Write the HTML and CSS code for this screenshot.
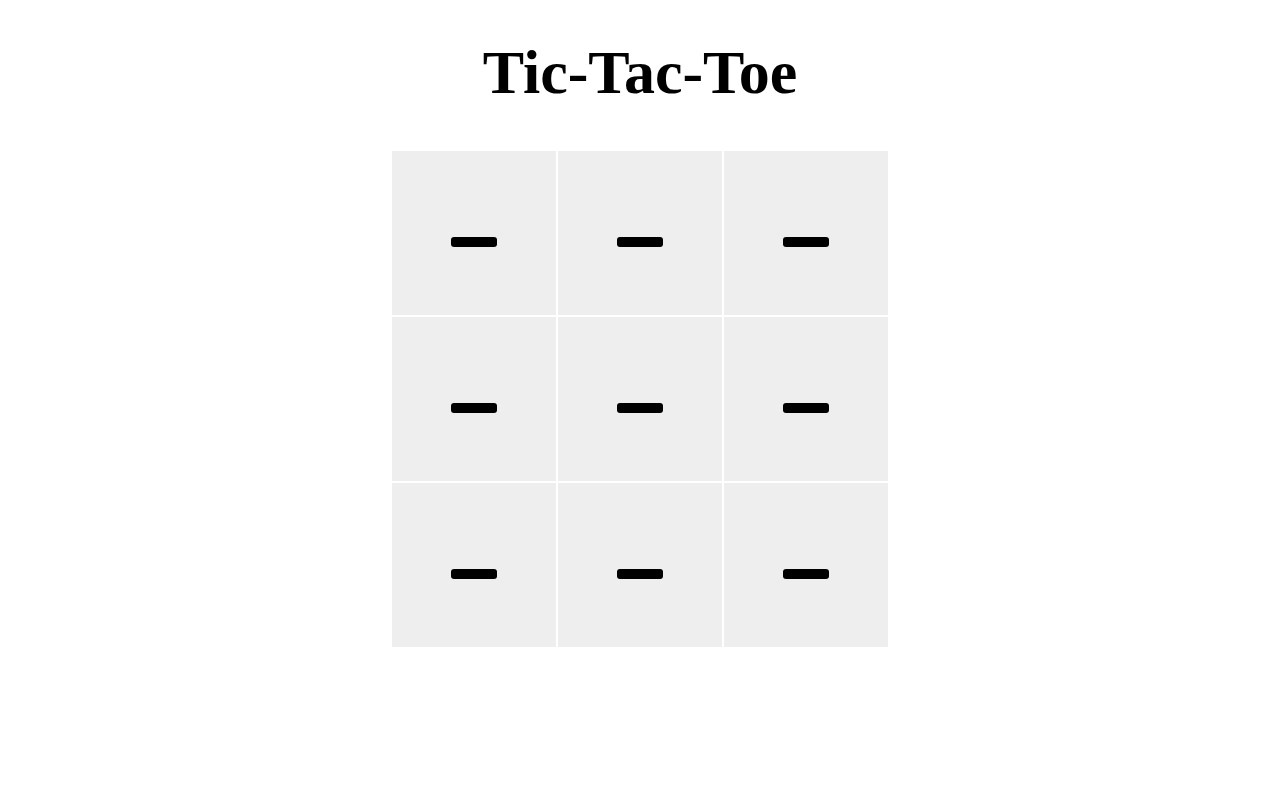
FILE: index.html
```html
<!DOCTYPE html>
<html lang="en">
<head>
  <meta charset="UTF-8">
  <title>Tic-Tac-Toe</title>
  <link rel="stylesheet" href="styles.css">
</head>
<body>
  <h1>Tic-Tac-Toe</h1>
  <div class="board" id="board">
    <div class="cell"><span class="mark"></span></div>
    <div class="cell"><span class="mark"></span></div>
    <div class="cell"><span class="mark"></span></div>
    <div class="cell"><span class="mark"></span></div>
    <div class="cell"><span class="mark"></span></div>
    <div class="cell"><span class="mark"></span></div>
    <div class="cell"><span class="mark"></span></div>
    <div class="cell"><span class="mark"></span></div>
    <div class="cell"><span class="mark"></span></div>
  </div>
</body>
</html>
```

FILE: styles.css
```css
body {
  font-family: "Liberation Serif", "Times New Roman", serif;
  background-color: white;
  margin: 0;
  padding: 0;
}

h1 {
  text-align: center;
  font-size: 62px;
  line-height: 71px;
  margin: 37px 0 43px;
}

.board {
  display: grid;
  grid-template-columns: repeat(3, 164px);
  grid-auto-rows: 164px;
  gap: 2px;
  justify-content: center;
}

.cell {
  background-color: #eeeeee;
  display: flex;
  align-items: center;
  justify-content: center;
}

.mark {
  width: 46px;
  height: 10px;
  margin-top: 18px;
  background-color: black;
  border-radius: 3px;
}
```
